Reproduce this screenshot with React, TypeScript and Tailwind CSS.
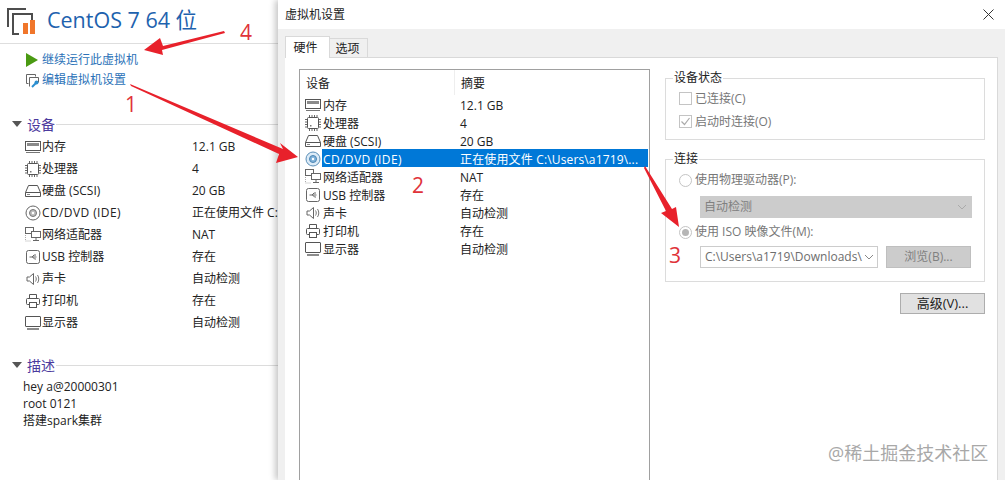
import React from "react";

const FONT = "font-['Open_Sans','Noto_Sans_CJK_SC',sans-serif]";

const ICONS: Record<string, React.ReactNode> = {
  memory: (
    <>
      <rect x="1.5" y="3.5" width="15" height="9" fill="#fff" stroke="#555" />
      <rect x="3" y="5" width="12" height="3" fill="#8a8a8a" />
      <path d="M2 14.5h14" stroke="#777" />
    </>
  ),
  cpu: (
    <>
      <rect x="3.5" y="3.5" width="11" height="11" rx="1" fill="#fff" stroke="#555" />
      <path d="M1 5.5h2M1 8h2M1 10.5h2M1 13h2M15 5.5h2M15 8h2M15 10.5h2M15 13h2M5.5 1v2M8 1v2M10.500 1v2M13 1v2M5.500 15v2M8 15v2M10.500 15v2M13 15v2" stroke="#666" />
      <rect x="6" y="11" width="1.500" height="1.500" fill="#777" />
    </>
  ),
  disk: (
    <>
      <path d="M4.500 3.500h9l3 7v4h-15v-4z" fill="#fff" stroke="#555" />
      <path d="M1.500 10.500h15" stroke="#555" />
      <path d="M3 12.500h3" stroke="#888" />
    </>
  ),
  cd: (
    <>
      <circle cx="9" cy="9" r="7" fill="#fff" stroke="#666" />
      <circle cx="9" cy="9" r="3.500" fill="#bbb" stroke="#777" />
      <circle cx="9" cy="9" r="1.200" fill="#fff" />
    </>
  ),
  cdSelected: (
    <>
      <circle cx="9" cy="9" r="7" fill="#dcebf7" stroke="#5b8fb8" />
      <circle cx="9" cy="9" r="3.500" fill="#7fb2da" stroke="#4d86b3" />
      <circle cx="9" cy="9" r="1.200" fill="#fff" />
    </>
  ),
  network: (
    <>
      <rect x="1.500" y="1.500" width="8" height="6" fill="#fff" stroke="#666" />
      <rect x="7.500" y="5.500" width="9" height="6" fill="#fff" stroke="#666" />
      <path d="M12 11.500v3M9 14.500h6" stroke="#666" />
      <path d="M1.500 9v6h6" stroke="#aaa" strokeDasharray="1 1" fill="none" />
    </>
  ),
  usb: (
    <>
      <rect x="2.500" y="2.500" width="13" height="13" rx="2" fill="#fff" stroke="#666" />
      <path d="M5.500 9h7M8 9l2-2h2M8.500 9l2 2h1.500" stroke="#666" fill="none" />
    </>
  ),
  sound: (
    <>
      <path d="M3 7h2.500l4-3.500v11l-4-3.500H3z" fill="#fff" stroke="#666" />
      <path d="M11.500 6.500c1 1.500 1 3.500 0 5M13.500 5c1.700 2.500 1.700 5.500 0 8" fill="none" stroke="#777" />
    </>
  ),
  printer: (
    <>
      <path d="M5.500 6V2.500h7V6" fill="#fff" stroke="#555" />
      <rect x="2.500" y="6.500" width="13" height="6" rx="1" fill="#fff" stroke="#555" />
      <rect x="5.500" y="10.500" width="7" height="5" fill="#fff" stroke="#555" />
    </>
  ),
  display: (
    <>
      <rect x="1.500" y="2.500" width="15" height="10" rx="0.500" fill="#fff" stroke="#555" />
      <path d="M3 15h12" stroke="#666" strokeWidth="1.500" />
    </>
  ),
};

const DEVICES = [
  { icon: "memory", name: "内存", left: "12.1 GB", right: "12.1 GB" },
  { icon: "cpu", name: "处理器", left: "4", right: "4" },
  { icon: "disk", name: "硬盘 (SCSI)", left: "20 GB", right: "20 GB" },
  { icon: "cd", name: "CD/DVD (IDE)", left: "正在使用文件 C:", right: "正在使用文件 C:\\Users\\a1719\\..." },
  { icon: "network", name: "网络适配器", left: "NAT", right: "NAT" },
  { icon: "usb", name: "USB 控制器", left: "存在", right: "存在" },
  { icon: "sound", name: "声卡", left: "自动检测", right: "自动检测" },
  { icon: "printer", name: "打印机", left: "存在", right: "存在" },
  { icon: "display", name: "显示器", left: "自动检测", right: "自动检测" },
];

const DeviceIcon = ({ name, className = "" }: { name: string; className?: string }) => (
  <svg width="18" height="18" viewBox="0 0 18 18" className={`shrink-0 ${className}`}>
    {ICONS[name]}
  </svg>
);

const SectionHeader = ({ title }: { title: string }) => (
  <div className="flex items-center h-[20px] pl-[12px]">
    <span className="w-0 h-0 border-x-[5px] border-x-transparent border-t-[6px] border-t-[#555]" />
    <span className="ml-[5px] text-[14px] text-[#4b3a9e]">{title}</span>
    <span className="ml-[1px] flex-1 h-px bg-[#dcdcdc]" />
  </div>
);

const GroupBox = ({ title, className, children }: { title: string; className: string; children: React.ReactNode }) => (
  <fieldset className={`border border-[#dcdcdc] ${className}`}>
    <legend className="-ml-[6px] px-[1px] text-[12px] leading-[16px] text-[#222]">{title}</legend>
    {children}
  </fieldset>
);

const CheckRow = ({ label, checked }: { label: string; checked?: boolean }) => (
  <div className="flex items-center h-[23px] gap-[3px] text-[12px] text-[#777]">
    <span className="w-[13px] h-[13px] border border-[#c4c4c4] flex items-center justify-center">
      {checked && (
        <svg width="11" height="11" viewBox="0 0 11 11">
          <path d="M1.500 5.500l3 3 5-6.500" fill="none" stroke="#aaa" strokeWidth="1.200" />
        </svg>
      )}
    </span>
    {label}
  </div>
);

const RadioRow = ({ label, checked }: { label: string; checked?: boolean }) => (
  <div className="flex items-center h-[20px] gap-[3px] text-[12px] text-[#777]">
    <span className="w-[13px] h-[13px] rounded-full border border-[#c4c4c4] flex items-center justify-center">
      {checked && <span className="w-[7px] h-[7px] rounded-full bg-[#b5b5b5]" />}
    </span>
    {label}
  </div>
);

const Chevron = ({ color }: { color: string }) => (
  <svg width="10" height="6" viewBox="0 0 10 6" className="shrink-0">
    <path d="M1 1l4 4 4-4" fill="none" stroke={color} />
  </svg>
);

const Sidebar = () => (
  <aside className="w-[278px] shrink-0 bg-white overflow-hidden">
    <header className="h-[44px] border-b border-[#dedede] flex items-center pl-[7px] pb-[3px]">
      <svg width="29" height="29" viewBox="0 0 29 29" className="shrink-0">
        <path d="M1 21V3h18" fill="none" stroke="#4d4d4d" strokeWidth="2" />
        <path d="M12 28H6V8h19v6" fill="none" stroke="#4d4d4d" strokeWidth="2" />
        <rect x="16" y="17" width="5" height="11" fill="#f0762b" />
        <rect x="23" y="14" width="5" height="14" fill="#f0762b" />
      </svg>
      <h1 className="ml-[11px] text-[21.5px] leading-none text-[#1e62ae] whitespace-nowrap">CentOS 7 64 位</h1>
    </header>

    <div className="pt-[6px] pl-[25px] text-[12px] text-[#2b72b8]">
      <div className="flex items-center h-[20px] gap-[3px]">
        <svg width="14" height="14" viewBox="0 0 14 14" className="shrink-0">
          <path d="M1 0l12 7-12 7z" fill="#4a9a12" />
        </svg>
        继续运行此虚拟机
      </div>
      <div className="flex items-center h-[20px] gap-[2px]">
        <svg width="15" height="15" viewBox="0 0 15 15" className="shrink-0">
          <path d="M3.500 10.500h-2v-9h9v2" fill="none" stroke="#666" />
          <path d="M4.500 13.500v-9h9v5" fill="none" stroke="#666" />
          <path d="M7 14l4-4" stroke="#2b8fd0" strokeWidth="2" />
          <circle cx="11.500" cy="9.500" r="2" fill="#2b8fd0" />
        </svg>
        编辑虚拟机设置
      </div>
    </div>

    <div className="mt-[24px]">
      <SectionHeader title="设备" />
      <div className="pt-[2px] pl-[24px] text-[12px] text-[#222]">
        {DEVICES.map((d) => (
          <div key={d.name} className="grid grid-cols-[168px_1fr] h-[22px] items-center whitespace-nowrap">
            <div className="flex items-center">
              <DeviceIcon name={d.icon} />
              <span className={d.icon === "cd" ? "tracking-[0.4px]" : ""}>{d.name}</span>
            </div>
            <span>{d.left}</span>
          </div>
        ))}
      </div>
    </div>

    <div className="mt-[21px]">
      <SectionHeader title="描述" />
      <div className="pl-[23px] pt-[3px] text-[12px] leading-[17px] text-[#222]">
        <p>hey a@20000301</p>
        <p>root 0121</p>
        <p>搭建spark集群</p>
      </div>
    </div>
  </aside>
);

const SettingsDialog = () => (
  <main className="flex-1 min-w-0 flex flex-col bg-[#f0f0f0] shadow-[-3px_0_6px_rgba(0,0,0,0.22)] z-10">
    <div className="h-[29px] shrink-0 bg-white flex items-center justify-between pl-[7px] pr-[11px] text-[12px] text-[#222]">
      虚拟机设置
      <svg width="11" height="11" viewBox="0 0 11 11">
        <path d="M0.500 0.500l10 10M10.500 0.500l-10 10" stroke="#333" />
      </svg>
    </div>

    <div className="h-[28px] shrink-0 flex items-end pl-[7px] text-[12px] text-[#222]">
      <div className="w-[45px] h-[22px] pr-[4px] bg-white border border-b-0 border-[#d9d9d9] flex items-center justify-center relative top-px z-10">
        硬件
      </div>
      <div className="w-[38px] h-[19px] pt-[2px] pr-[2px] bg-[#f0f0f0] border border-b-0 border-l-0 border-[#d9d9d9] flex items-center justify-center">
        选项
      </div>
    </div>

    <div className="flex-1 min-h-0 ml-[7px] mr-[7px] bg-white border-t border-r border-[#d9d9d9] flex pl-[14px] pt-[11px] text-[12px]">
      <div className="w-[351px] shrink-0 border border-b-0 border-[#a0a0a0] text-[#222]">
        <div className="grid grid-cols-[155px_1fr] h-[25px] items-center">
          <span className="pl-[6px] pt-[3px] border-r border-[#eee] leading-[22px]">设备</span>
          <span className="pl-[6px] pt-[3px]">摘要</span>
        </div>
        {DEVICES.map((d) => {
          const selected = d.icon === "cd";
          return (
            <div key={d.name} className="flex h-[18px] items-center pl-[4px] pr-[1px] whitespace-nowrap">
              <DeviceIcon name={selected ? "cdSelected" : d.icon} className="mt-[2px]" />
              <div className={`flex-1 min-w-0 h-full pt-[4px] flex items-center ${selected ? "bg-[#0078d7] text-white" : ""}`}>
                <span className={`w-[138px] shrink-0 pl-[1px] ${selected ? "tracking-[0.4px]" : ""}`}>{d.name}</span>
                <span className={selected ? "tracking-[0.15px]" : ""}>{d.right}</span>
              </div>
            </div>
          );
        })}
      </div>

      <div className="w-[320px] ml-[15px] shrink-0 -mt-[1px]">
        <GroupBox title="设备状态" className="h-[70px] pl-[13px] pt-[1px] mt-[2px]">
          <CheckRow label="已连接(C)" />
          <CheckRow label="启动时连接(O)" checked />
        </GroupBox>

        <GroupBox title="连接" className="h-[131px] mt-[11px] pl-[13px] pt-[3px]">
          <RadioRow label="使用物理驱动器(P):" />
          <div className="mt-[6px] ml-[21px] w-[272px] h-[22px] bg-[#cccccc] flex items-center justify-between pl-[4px] pr-[5px] text-[#808080]">
            自动检测
            <Chevron color="#aaa" />
          </div>
          <div className="mt-[4px]">
            <RadioRow label="使用 ISO 映像文件(M):" checked />
          </div>
          <div className="mt-[4px] ml-[21px] flex gap-[8px]">
            <div className="w-[178px] h-[22px] bg-white border border-[#cccccc] flex items-center justify-between pl-[4px] pr-[3px] text-[#6d6d6d] whitespace-nowrap">
              <span>C:\Users\a1719\Downloads\</span>
              <Chevron color="#888" />
            </div>
            <div className="w-[85px] h-[22px] bg-[#cccccc] border border-[#bfbfbf] flex items-center justify-center text-[#808080]">
              浏览(B)...
            </div>
          </div>
        </GroupBox>

        <div className="mt-[11px] flex justify-end">
          <button className="w-[85px] h-[21px] bg-[#e1e1e1] border border-[#adadad] text-[13px] leading-none text-[#222]">高级(V)...</button>
        </div>
      </div>
    </div>
  </main>
);

// 截图上的红色标注
const Annotations = () => (
  <>
    <svg width="1005" height="480" viewBox="0 0 1005 480" className="absolute inset-0 z-20 pointer-events-none">
      <polygon points="224,31 163,46 160,38 144,50 163,55 162,50 225,33" fill="#e8212b" />
      <polygon points="130,84 283,149 280,143 298,157 276,163 279,154 131,86" fill="#e8212b" />
      <polygon points="645,166 672,209 676,207 679,227 661,213 666,211 644,168" fill="#e8212b" />
    </svg>
    <span className="absolute left-[125px] top-[92px] z-20 text-[21px] leading-[24px] text-[#e0333a]">1</span>
    <span className="absolute left-[412px] top-[173px] z-20 text-[21px] leading-[24px] text-[#e0333a]">2</span>
    <span className="absolute left-[669px] top-[243px] z-20 text-[21px] leading-[24px] text-[#e0333a]">3</span>
    <span className="absolute left-[240px] top-[20px] z-20 text-[21px] leading-[24px] text-[#e0333a]">4</span>
    <span className="absolute left-[828px] top-[442px] z-20 text-[18px] leading-[22px] text-[#a8a8a8] whitespace-nowrap">@稀土掘金技术社区</span>
  </>
);

export default function App() {
  return (
    <div className={`relative w-[1005px] h-[480px] overflow-hidden flex bg-white ${FONT}`}>
      <Sidebar />
      <SettingsDialog />
      <Annotations />
    </div>
  );
}
